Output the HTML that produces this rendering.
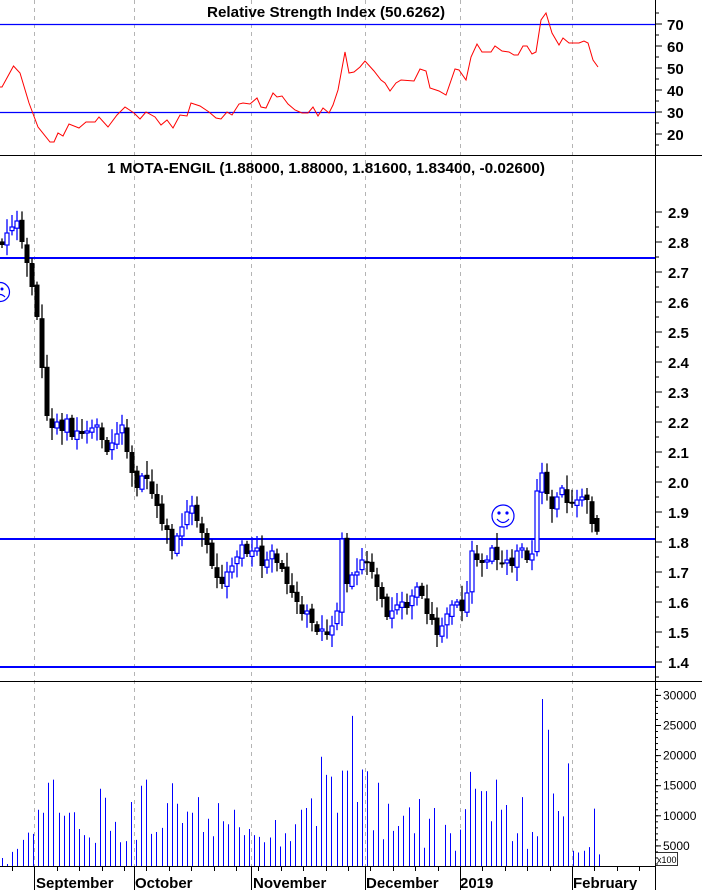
<!DOCTYPE html>
<html><head><meta charset="utf-8"><style>
html,body{margin:0;padding:0;background:#fff;}
svg{display:block;font-family:"Liberation Sans",Arial,sans-serif;}
</style></head><body>
<svg id="s" width="702" height="890" viewBox="0 0 702 890" xmlns="http://www.w3.org/2000/svg">
<rect width="702" height="890" fill="#fff"/>
<g id="grid" stroke="#b4b4b4" stroke-dasharray="4,4" stroke-width="1"></g>
<line x1="0" y1="155.5" x2="702" y2="155.5" stroke="#000"/>
<line x1="0" y1="681.5" x2="702" y2="681.5" stroke="#000"/>
<line x1="655.5" y1="0" x2="655.5" y2="890" stroke="#000"/>
<line x1="0" y1="866.5" x2="655" y2="866.5" stroke="#000"/>
<text x="326" y="17" font-size="14.5" font-weight="bold" text-anchor="middle" textLength="238" lengthAdjust="spacingAndGlyphs">Relative Strength Index (50.6262)</text>
<line x1="0" y1="24.5" x2="655" y2="24.5" stroke="#00f" stroke-width="1.2"/>
<line x1="0" y1="112.5" x2="655" y2="112.5" stroke="#00f" stroke-width="1.2"/>
<polyline id="rsi" fill="none" stroke="#f00" stroke-width="1"/>
<g font-size="15" font-weight="bold" id="rsiLab"></g>
<text x="326" y="173" font-size="14.5" font-weight="bold" text-anchor="middle" textLength="438" lengthAdjust="spacingAndGlyphs">1 MOTA-ENGIL (1.88000, 1.88000, 1.81600, 1.83400, -0.02600)</text>
<line x1="0" y1="258" x2="655" y2="258" stroke="#00f" stroke-width="2"/>
<line x1="0" y1="539" x2="655" y2="539" stroke="#00f" stroke-width="2"/>
<line x1="0" y1="667" x2="655" y2="667" stroke="#00f" stroke-width="2"/>
<g id="candles"></g>
<g font-size="15" font-weight="bold" id="pLab"></g>
<g fill="none" stroke="#00f" stroke-width="1.2">
<circle cx="0" cy="292" r="9.5"/>
<circle cx="503" cy="516" r="11"/>
<path d="M497 519 Q503 526 509 519"/>
</g>
<circle cx="499" cy="513" r="1.6" fill="#00f"/><circle cx="507" cy="513" r="1.6" fill="#00f"/>
<circle cx="2" cy="289" r="1.5" fill="#00f"/>
<path d="M-4 297 Q0 292 5 297" fill="none" stroke="#00f" stroke-width="1.2"/>
<g id="vol" stroke="#00f" stroke-width="1"></g>
<g font-size="12" id="vLab"></g>
<rect x="655.5" y="852.5" width="22" height="13" fill="#fff" stroke="#000" stroke-width="0.8"/>
<text x="657" y="863" font-size="9">x100</text>
<g id="ticks" stroke="#000"></g>
<g font-size="15" font-weight="bold">
<text x="36" y="888">September</text>
<text x="135" y="888">October</text>
<text x="253" y="888">November</text>
<text x="366" y="888">December</text>
<text x="460" y="888">2019</text>
<text x="573" y="888">February</text>
</g>
</svg>
<script>
var NS="http://www.w3.org/2000/svg";
function el(p,t,a,txt){var e=document.createElementNS(NS,t);for(var k in a)e.setAttribute(k,a[k]);if(txt!=null)e.textContent=txt;document.getElementById(p).appendChild(e);return e;}
[34,134,251,365,460,572].forEach(function(x){el("grid","line",{x1:x+.5,y1:0,x2:x+.5,y2:866});el("ticks","line",{x1:x+.5,y1:866,x2:x+.5,y2:890});});
for(var x=12;x<655;x+=22.4){el("ticks","line",{x1:Math.round(x)+.5,y1:866,x2:Math.round(x)+.5,y2:871});}
var r=[[0,87],[2,87],[13.5,66],[20,73],[29,103],[38,127],[50,142],[54,142],[58,133],[63,136],[69,124],[79,128],[86,122],[95,122],[99,117],[108,127],[117,115],[125,107],[134,113],[140,119],[146,112],[155,117],[161,125],[167,120],[173,128],[180,115],[187,116],[191,103],[200,106],[209,112],[216,118],[221,119],[227,112],[232,115],[239,104],[243,103],[250,104],[257,98],[261,107],[266,108],[273,93],[277,97],[282,96],[288,104],[295,110],[302,113],[308,113],[313,107],[318,116],[323,108],[329,113],[333,105],[338,90],[345,52],[349,73],[354,72],[360,67],[365,61],[374,71],[381,80],[385,83],[390,91],[396,83],[401,80],[414,81],[420,69],[426,71],[430,88],[439,91],[446,95],[455,69],[459,70],[466,80],[471,57],[477,44],[482,52],[491,52],[495,46],[502,51],[509,52],[514,55],[518,55],[523,46],[527,46],[532,54],[536,52],[541,20],[546,13],[552,33],[559,45],[563,38],[569,43],[579,43],[584,41],[588,43],[593,60],[598,67]];
document.getElementById("rsi").setAttribute("points",r.map(function(p){return p.join(",")}).join(" "));
[70,60,50,40,30,20].forEach(function(v){var y=24+(70-v)*2.2;el("rsiLab","text",{x:667,y:y+6},v);el("ticks","line",{x1:655,y1:y,x2:662,y2:y});});
for(var v=15;v<=85;v+=5){var y=24+(70-v)*2.2;if(y>2&&y<154)el("ticks","line",{x1:655,y1:y,x2:659,y2:y});}
function py(p){return 542-(p-1.8)*300;}
for(var p=1.4;p<=2.91;p+=0.1){var y=py(p);el("pLab","text",{x:668,y:y+6},p.toFixed(1));el("ticks","line",{x1:655,y1:y,x2:662,y2:y});el("ticks","line",{x1:655,y1:y+15,x2:659,y2:y+15});}
var c=[2.79,2.83,2.85,2.87,2.80,2.73,2.65,2.55,2.38,2.22,2.18,2.20,2.17,2.21,2.15,2.17,2.16,2.17,2.18,2.19,2.14,2.10,2.13,2.16,2.19,2.10,2.03,1.98,2.02,2.01,1.96,1.92,1.86,1.84,1.77,1.82,1.85,1.90,1.92,1.87,1.83,1.79,1.72,1.68,1.66,1.70,1.72,1.75,1.79,1.76,1.77,1.78,1.72,1.74,1.77,1.73,1.71,1.66,1.63,1.60,1.56,1.57,1.53,1.50,1.51,1.49,1.52,1.57,1.81,1.66,1.69,1.70,1.74,1.73,1.70,1.65,1.61,1.55,1.57,1.59,1.60,1.58,1.62,1.65,1.62,1.56,1.54,1.49,1.52,1.56,1.59,1.60,1.57,1.63,1.77,1.74,1.73,1.74,1.78,1.74,1.73,1.74,1.72,1.77,1.78,1.74,1.76,1.97,2.03,1.96,1.91,1.95,1.98,1.93,1.93,1.94,1.95,1.94,1.86,1.834];
var sp=595/(c.length-1);
var prev=2.81;
for(var i=0;i<c.length;i++){var x=2+sp*i;var o=prev+((i*7)%5-2)*0.004;if(i==c.length-1)o=1.88;var cl=c[i];
var hi=Math.max(o,cl)+0.01+((i*13)%7)*0.006,lo=Math.min(o,cl)-0.01-((i*11)%7)*0.006;
var up=cl>=o,col=up?"#00f":"#000";
el("candles","line",{x1:x,y1:py(hi),x2:x,y2:py(lo),stroke:col,"stroke-width":1.3});
var t=py(Math.max(o,cl)),b=py(Math.min(o,cl));if(b-t<2)b=t+2;
if(up)el("candles","rect",{x:x-2,y:t,width:4,height:b-t,fill:"#fff",stroke:"#00f","stroke-width":1.2});
else el("candles","rect",{x:x-2.5,y:t,width:5,height:b-t,fill:"#000"});
prev=cl;}
var v=[3,2,4,4.5,6,7.2,7,11,10.5,15.5,16,10.5,10,10.5,10.6,7.8,6.8,6.4,5.5,14.5,13,7.5,9,5.6,5.8,12.3,6,15,16,7,7.3,8,12.1,15.4,12,8.8,10.7,10.5,13.1,7.3,9.5,6.6,12.1,9.1,8.6,11,8.1,6.8,7.8,6.8,6.5,5.6,6.4,9.3,4.9,7.1,5.8,8.6,11,11.3,12.9,8.3,19.8,16.8,16.5,10.5,17.5,17.5,26.6,12.3,17.7,17.4,7.6,15.5,6.1,12,7.5,8.3,10,11.4,7.1,12.8,4.7,9.5,11.3,0,8.5,7.1,4.2,7.7,11.1,17.3,14.5,14.1,14.1,9.1,16,11,11.8,5.8,7.1,13.1,4.5,7.3,6.6,29.4,24.3,13.7,10.8,9.9,18.7,4.2,3.9,4.2,4.8,11.2,3.6];
var vs=597/(v.length-1);
for(var i=0;i<v.length;i++){if(!v[i])continue;var x=Math.round(2+vs*i)+.5;var y=Math.max(876-v[i]*6.02,683);el("vol","line",{x1:x,y1:866,x2:x,y2:y});}
[30000,25000,20000,15000,10000,5000].forEach(function(k){var y=876-k/1000*6.02;el("vLab","text",{x:663,y:y+4},k);el("ticks","line",{x1:655,y1:y,x2:661,y2:y});});
for(var k=2000;k<32000;k+=1000){var y=876-k/1000*6.02;if(y>683&&y<866)el("ticks","line",{x1:655,y1:y,x2:658,y2:y});}
</script>
</body></html>
